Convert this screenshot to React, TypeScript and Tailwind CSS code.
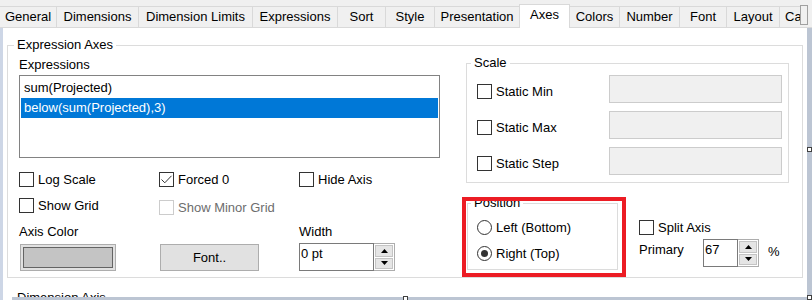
import React from 'react';

const tabs = [
  { label: 'General', w: 'w-[57px]' },
  { label: 'Dimensions', w: 'w-[82px]' },
  { label: 'Dimension Limits', w: 'w-[114px]' },
  { label: 'Expressions', w: 'w-[85px]' },
  { label: 'Sort', w: 'w-[48px]' },
  { label: 'Style', w: 'w-[49px]' },
  { label: 'Presentation', w: 'w-[85px]' },
  { label: 'Axes', w: 'w-[51px]', active: true },
  { label: 'Colors', w: 'w-[50px]' },
  { label: 'Number', w: 'w-[60px]' },
  { label: 'Font', w: 'w-[47px]' },
  { label: 'Layout', w: 'w-[53px]' },
  { label: 'Caption', w: 'w-[56px]' },
];

function Check({ label, checked, disabled, className = '' }: { label: string; checked?: boolean; disabled?: boolean; className?: string }) {
  return (
    <div className={`flex items-center gap-[4px] h-[15px] ${className}`}>
      <span
        className={`w-[15px] h-[15px] shrink-0 border bg-white ${disabled ? 'border-[#cccccc]' : 'border-[#333333]'}`}
      >
        {checked && (
          <svg width="13" height="13" viewBox="0 0 13 13">
            <path d="M1.5 6.5 L4.8 9.8 L11.5 2.8" fill="none" stroke="#333333" strokeWidth="1" />
          </svg>
        )}
      </span>
      <span className={`leading-[15px] whitespace-nowrap ${disabled ? 'text-[#6d6d6d]' : ''}`}>{label}</span>
    </div>
  );
}

function Radio({ label, checked }: { label: string; checked?: boolean }) {
  return (
    <div className="flex items-center gap-[4px] h-[16px]">
      <span className="w-[15px] h-[15px] shrink-0 rounded-full border border-[#333333] bg-white flex items-center justify-center">
        {checked && <span className="w-[7px] h-[7px] rounded-full bg-[#333333]" />}
      </span>
      <span className="leading-[15px] whitespace-nowrap">{label}</span>
    </div>
  );
}

function Arrow({ up }: { up?: boolean }) {
  return (
    <svg width="7" height="4" viewBox="0 0 7 4">
      <path d={up ? 'M0 4 L3.5 0 L7 4 Z' : 'M0 0 L7 0 L3.5 4 Z'} fill="#000" />
    </svg>
  );
}

function Spinner({ value, textW }: { value: string; textW: string }) {
  return (
    <div className="flex h-[28px]">
      <div className={`${textW} border border-[#7a7a7a] bg-white pl-[1px] pt-[2px] leading-[15px]`}>{value}</div>
      <div className="w-[21px] flex flex-col border-y border-r border-[#adadad] bg-white p-[1px] gap-[1px]">
        <div className="flex-1 flex items-center justify-center bg-[#e5e5e5] border border-[#c4c4c4]">
          <Arrow up />
        </div>
        <div className="flex-1 flex items-center justify-center bg-[#e5e5e5] border border-[#c4c4c4]">
          <Arrow />
        </div>
      </div>
    </div>
  );
}

export default function App() {
  return (
    <div className="relative w-[812px] h-[300px] overflow-hidden bg-[#f0f0f0] font-['Liberation_Sans',Arial,sans-serif] text-[13px] text-black">
      {/* tab strip */}
      <div className="flex h-[28px]">
        <div className="flex items-end w-[800px] h-[28px] overflow-hidden">
          {tabs.map((t) =>
            t.active ? (
              <div
                key={t.label}
                className={`${t.w} h-[24px] shrink-0 -ml-px relative bg-white border-x border-t border-[#d9d9d9] flex items-center justify-center pb-[3px] whitespace-nowrap`}
              >
                {t.label}
              </div>
            ) : (
              <div
                key={t.label}
                className={`${t.w} h-[22px] shrink-0 border-t border-r border-b border-[#d9d9d9] flex items-center justify-center whitespace-nowrap`}
              >
                {t.label}
              </div>
            )
          )}
        </div>
        <div className="w-[8px] h-[28px] border-b border-[#d9d9d9] pt-[5px]">
          <div className="w-[8px] h-[20px] border border-[#a0a0a0] bg-[#f0f0f0]" />
        </div>
        <div className="flex-1 h-[28px] border-b border-[#d9d9d9]" />
      </div>

      <div className="flex h-[272px]">
        <div className="w-[3px] bg-[#cdd6e6]" />
        <div className="w-[804px] flex flex-col">
          <div className="h-[269px] bg-white overflow-hidden px-[4px] pt-[9px]">
            <fieldset className="h-[241px] border border-[#dcdcdc]">
              <legend className="ml-[6px] px-[3px] leading-[16px]">Expression Axes</legend>
              <div className="flex pl-[11px]">
                {/* left column */}
                <div className="w-[421px] pt-[4px]">
                  <div className="leading-[15px]">Expressions</div>
                  <div className="mt-[3px] h-[83px] border border-[#828282] pt-[2px] px-[1px]">
                    <div className="h-[20px] leading-[20px] pl-[3px]">sum(Projected)</div>
                    <div className="h-[20px] leading-[20px] pl-[3px] bg-[#0078d7] text-white">below(sum(Projected),3)</div>
                  </div>
                  <div className="grid grid-cols-[140px_140px_140px] mt-[14px]">
                    <Check label="Log Scale" />
                    <Check label="Forced 0" checked />
                    <Check label="Hide Axis" />
                  </div>
                  <div className="grid grid-cols-[140px_140px_140px] items-start mt-[11px]">
                    <Check label="Show Grid" />
                    <Check label="Show Minor Grid" disabled className="mt-[2px]" />
                  </div>
                  <div className="grid grid-cols-[140px_140px_140px] mt-[9px] leading-[15px]">
                    <div>Axis Color</div>
                    <div />
                    <div>Width</div>
                  </div>
                  <div className="grid grid-cols-[140px_140px_140px] items-start mt-[4px]">
                    <div className="ml-[1px] mt-[1px] w-[96px] h-[27px] border border-[#adadad] bg-[#e1e1e1] p-[2px]">
                      <div className="w-full h-full border border-[#646464] bg-[#c4c4c4]" />
                    </div>
                    <div className="ml-[1px] mt-[1px] w-[99px] h-[27px] border border-[#adadad] bg-[#e1e1e1] flex items-center justify-center">
                      Font..
                    </div>
                    <Spinner value="0 pt" textW="w-[75px]" />
                  </div>
                </div>

                {/* right column */}
                <div className="w-[323px] ml-[26px] pt-[2px]">
                  <fieldset className="h-[128px] border border-[#dcdcdc]">
                    <legend className="ml-[4px] px-[3px] leading-[16px]">Scale</legend>
                    <div className="flex flex-col gap-[8px] pt-[4px] pl-[10px] pr-[6px]">
                      {['Static Min', 'Static Max', 'Static Step'].map((s) => (
                        <div key={s} className="flex items-center justify-between h-[28px]">
                          <Check label={s} className="mt-[4px]" />
                          <div className="w-[173px] h-[28px] border border-[#cccccc] bg-[#f0f0f0]" />
                        </div>
                      ))}
                    </div>
                  </fieldset>

                  <div className="flex mt-[12px]">
                    <fieldset className="ml-[1px] w-[151px] h-[75px] border border-[#dcdcdc]">
                      <legend className="ml-[3px] px-[3px] leading-[16px]">Position</legend>
                      <div className="pt-[8px] pl-[9px] flex flex-col gap-[10px]">
                        <Radio label="Left (Bottom)" />
                        <Radio label="Right (Top)" checked />
                      </div>
                    </fieldset>
                    <div className="ml-[21px] pt-[24px]">
                      <div className="h-[16px] flex items-center">
                        <Check label="Split Axis" />
                      </div>
                      <div className="flex items-start mt-[4px]">
                        <div className="w-[64px] mt-[3px] leading-[15px]">Primary</div>
                        <Spinner value="67" textW="w-[35px]" />
                        <div className="ml-[9px] mt-[5px] leading-[15px]">%</div>
                      </div>
                    </div>
                  </div>
                </div>
              </div>
            </fieldset>
            <fieldset className="mt-[12px] h-[40px] border border-[#dcdcdc]">
              <legend className="ml-[6px] px-[3px] leading-[16px]">Dimension Axis</legend>
            </fieldset>
          </div>
          <div className="h-[3px] flex">
            <div className="w-[9px] bg-white" />
            <div className="flex-1 bg-[#bcc5d3]" />
          </div>
        </div>
        <div className="w-[5px] bg-[#bcc5d3]" />
      </div>

      {/* highlight box */}
      <div className="absolute left-[462px] top-[197px] w-[164px] h-[80px] border-4 border-[#ec1c24]" />

      {/* resize handles */}
      <div className="absolute left-[807px] top-[147px] w-[5px] h-[5px] border border-[#404040] bg-white" />
      <div className="absolute left-[403px] top-[296px] w-[5px] h-[5px] border border-[#404040] bg-white" />
      <div className="absolute left-[807px] top-[295px] w-[5px] h-[5px] border border-[#404040] bg-white" />
    </div>
  );
}
